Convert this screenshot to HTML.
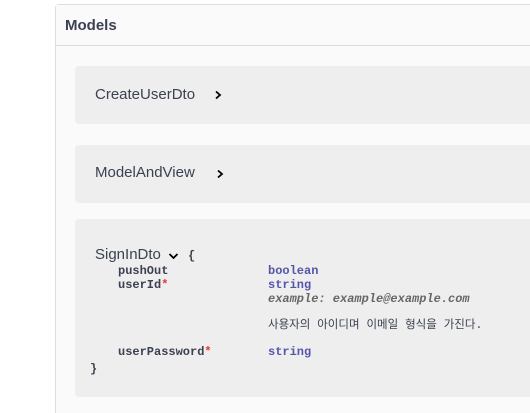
<!DOCTYPE html>
<html><head><meta charset="utf-8"><style>
html,body{margin:0;width:530px;height:413px;overflow:hidden}
body{background:#fff;font-family:"Liberation Sans",sans-serif;position:relative}
.panel{position:absolute;left:55px;top:4px;width:474px;height:409px;border:1px solid #ddd;border-right:none;border-bottom:none;border-radius:4px 0 0 0;background:#fafafa}
.hdr{height:40px;border-bottom:1px solid #ddd;background:#fafafa}
.hdr span{position:absolute;left:9px;top:12px;font-size:15px;font-weight:bold;color:#3b4151}
.box{position:absolute;left:75px;width:455px;background:#eeeeee;border-radius:4px 0 0 4px}
.t{position:absolute;left:20px;font-size:15px;color:#3b4151}
.m{font-family:"Liberation Mono",monospace;font-size:12px;font-weight:bold;color:#3b4151;position:absolute;white-space:nowrap}
.ty{color:#55a;}
.r{color:#e33}
</style></head><body>
<div class="panel"><div class="hdr"><span>Models</span></div></div>
<div class="box" style="top:66px;height:58px"><span class="t" style="top:20px">CreateUserDto</span>
<svg style="position:absolute;left:139px;top:24px" width="8" height="10"><path d="M2 1.5l4 3.5-4 3.5" stroke="#000" stroke-width="1.8" fill="none"/></svg></div>
<div class="box" style="top:145px;height:58px"><span class="t" style="top:19px">ModelAndView</span>
<svg style="position:absolute;left:141px;top:24px" width="8" height="10"><path d="M2 1.5l4 3.5-4 3.5" stroke="#000" stroke-width="1.8" fill="none"/></svg></div>
<div class="box" style="top:219px;height:178px">
<span class="t" style="top:27px">SignInDto</span>
<svg style="position:absolute;left:93px;top:33px" width="11" height="8"><path d="M1.5 2l4 4 4-4" stroke="#000" stroke-width="1.8" fill="none"/></svg>
<span class="m" style="left:113px;top:30px">{</span>
<span class="m" style="left:43px;top:45px">pushOut</span><span class="m ty" style="left:193px;top:45px">boolean</span>
<span class="m" style="left:43px;top:59px">userId<span class="r">*</span></span><span class="m ty" style="left:193px;top:59px">string</span>
<span class="m" style="left:193px;top:73px;color:#666;font-style:italic">example: example@example.com</span>
<span class="m" style="left:193px;top:97px;font-weight:normal;font-size:11.5px;font-family:'Liberation Mono','Noto Sans CJK KR',monospace">사용자의 아이디며 이메일 형식을 가진다.</span>
<span class="m" style="left:43px;top:126px">userPassword<span class="r">*</span></span><span class="m ty" style="left:193px;top:126px">string</span>
<span class="m" style="left:15px;top:143px">}</span>
</div>
</body></html>
